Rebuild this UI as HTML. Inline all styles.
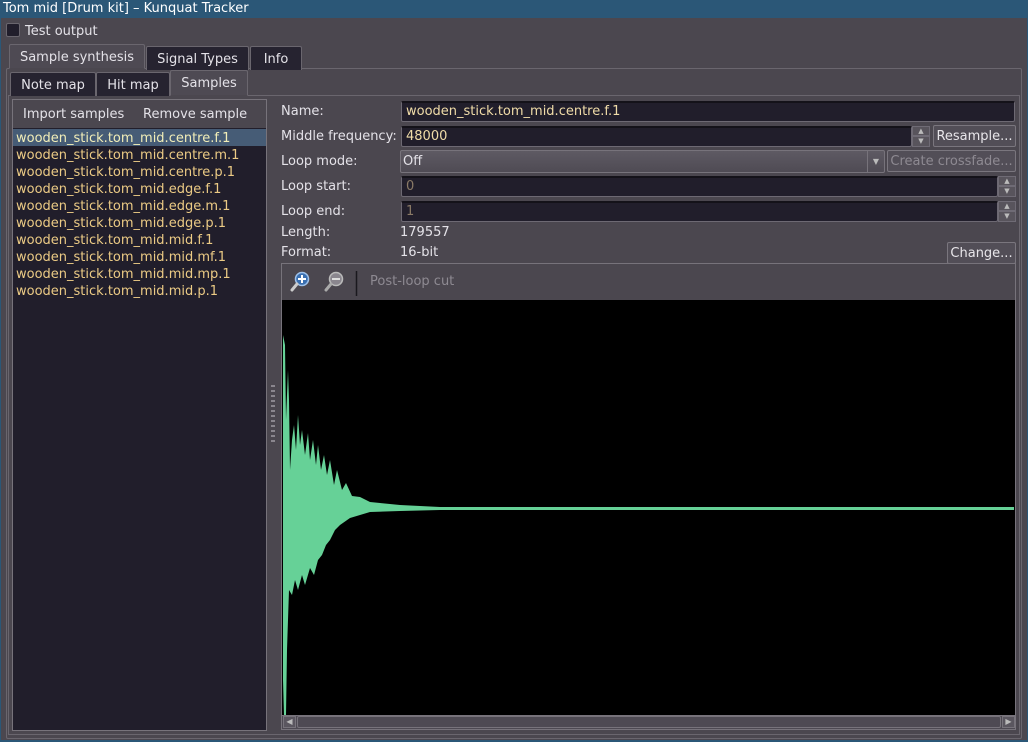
<!DOCTYPE html>
<html><head><meta charset="utf-8"><style>
*{box-sizing:border-box;margin:0;padding:0}
body{width:1028px;height:742px;background:#2b5777;font-family:"DejaVu Sans","Liberation Sans",sans-serif;font-size:13px;line-height:19px;color:#e4e2e8;position:relative;overflow:hidden}
.a{position:absolute}
.win{left:1px;top:18px;width:1026px;height:722px;background:#4b474f}
.title{left:0;top:0;width:1028px;height:18px;color:#fff;padding-left:3px;line-height:18px;font-size:13px}
.tab{position:absolute;height:24px;line-height:26px;text-align:center;border:1px solid #6a666e;border-bottom:none;border-radius:2px 2px 0 0;background:#262330;color:#e4e2e8}
.tab.sel{background:#4e4a53;color:#e4e2e8}
.field{position:absolute;background:#211e2b;border:1px solid #6d6973;border-top:2px solid #141219;border-radius:2px;color:#f0dca8;padding-left:4px;line-height:18px}
.btn{position:absolute;background:#524e57;border:1px solid #7a767e;border-radius:2px;text-align:center;line-height:21px;color:#e8e6ea}
.spin{position:absolute;width:18px;background:#58545c;border:1px solid #6f6b75;font-size:7px;color:#bbb;text-align:center;line-height:8px}
.lbl{position:absolute;left:281px;color:#e4e2e8}
.row{height:17px;line-height:19px;padding-left:3px;color:#eccb85}
</style></head><body>
<div class="a title">Tom mid [Drum kit] – Kunquat Tracker</div>
<div class="a win"></div>
<div class="a" style="left:6px;top:23px;width:14px;height:14px;background:#211e2b;border:1px solid #6a666e;border-radius:2px"></div>
<div class="a" style="left:25px;top:22px">Test output</div>
<div class="a" style="left:6px;top:68px;width:1016px;height:671px;border:1px solid #6a666e;border-radius:2px;background:#4b474f"></div>
<div class="tab sel" style="left:9px;top:44px;width:136px;height:25px;border-bottom:1px solid #4b474f">Sample synthesis</div>
<div class="tab" style="left:146px;top:46px;width:103px">Signal Types</div>
<div class="tab" style="left:250px;top:46px;width:52px">Info</div>
<div class="a" style="left:8px;top:95px;width:1012px;height:640px;border:1px solid #6a666e;background:#4b474f"></div>
<div class="tab" style="left:10px;top:72px;width:86px">Note map</div>
<div class="tab" style="left:96px;top:72px;width:74px">Hit map</div>
<div class="tab sel" style="left:170px;top:70px;width:78px;height:26px;border-bottom:1px solid #4b474f">Samples</div>
<div class="a" style="left:12px;top:99px;width:255px;height:632px;border:1px solid #77737b;background:#211e2b"></div>
<div class="a" style="left:13px;top:100px;width:253px;height:28px;background:#4b474f"></div>
<div class="a" style="left:23px;top:105px">Import samples</div>
<div class="a" style="left:143px;top:105px">Remove sample</div>
<div class="a" style="left:13px;top:129px;width:253px">
<div class="row" style="background:#465c76;color:#f2eeb8">wooden_stick.tom_mid.centre.f.1</div>
<div class="row">wooden_stick.tom_mid.centre.m.1</div>
<div class="row">wooden_stick.tom_mid.centre.p.1</div>
<div class="row">wooden_stick.tom_mid.edge.f.1</div>
<div class="row">wooden_stick.tom_mid.edge.m.1</div>
<div class="row">wooden_stick.tom_mid.edge.p.1</div>
<div class="row">wooden_stick.tom_mid.mid.f.1</div>
<div class="row">wooden_stick.tom_mid.mid.mf.1</div>
<div class="row">wooden_stick.tom_mid.mid.mp.1</div>
<div class="row">wooden_stick.tom_mid.mid.p.1</div>
</div>
<div class="a" style="left:271px;top:385px;width:4px;height:58px;background:repeating-linear-gradient(#8a868e 0 2px,transparent 2px 5px)"></div>
<div class="lbl" style="top:102px">Name:</div>
<div class="field" style="left:401px;top:101px;width:614px;height:21px">wooden_stick.tom_mid.centre.f.1</div>
<div class="lbl" style="top:127px">Middle frequency:</div>
<div class="field" style="left:401px;top:126px;width:511px;height:21px">48000</div>
<div class="spin" style="left:912px;top:126px;height:10px">▲</div>
<div class="spin" style="left:912px;top:136px;height:11px">▼</div>
<div class="btn" style="left:933px;top:125px;width:83px;height:22px">Resample...</div>
<div class="lbl" style="top:152px">Loop mode:</div>
<div class="a" style="left:400px;top:150px;width:485px;height:23px;border:1px solid #77737b;border-radius:2px;background:linear-gradient(#5e5a63,#4f4b54);padding-left:2px;line-height:21px">Off</div>
<div class="a" style="left:867px;top:151px;width:17px;height:21px;border-left:1px solid #77737b;font-size:8px;color:#bbb;text-align:center;line-height:21px">▼</div>
<div class="btn" style="left:887px;top:150px;width:129px;height:22px;color:#8e8a92">Create crossfade...</div>
<div class="lbl" style="top:177px">Loop start:</div>
<div class="field" style="left:401px;top:176px;width:597px;height:21px;color:#8a7a66">0</div>
<div class="spin" style="left:998px;top:176px;height:10px">▲</div>
<div class="spin" style="left:998px;top:186px;height:11px">▼</div>
<div class="lbl" style="top:202px">Loop end:</div>
<div class="field" style="left:401px;top:201px;width:597px;height:21px;color:#8a7a66">1</div>
<div class="spin" style="left:998px;top:201px;height:10px">▲</div>
<div class="spin" style="left:998px;top:211px;height:11px">▼</div>
<div class="lbl" style="top:223px">Length:</div>
<div class="a" style="left:400px;top:223px">179557</div>
<div class="lbl" style="top:243px">Format:</div>
<div class="a" style="left:400px;top:243px">16-bit</div>
<div class="btn" style="left:947px;top:242px;width:69px;height:22px">Change...</div>
<div class="a" style="left:281px;top:263px;width:735px;height:467px;border:1px solid #77737b;background:#4b474f"></div>
<svg class="a" style="left:288px;top:268px" width="80" height="28">
<circle cx="14" cy="11" r="6.5" fill="#3a6fb0" stroke="#9fc2ea" stroke-width="1.5"/>
<path d="M10 11h8M14 7v8" stroke="#fff" stroke-width="2"/>
<path d="M9 16l-5 6" stroke="#ccc" stroke-width="3" stroke-linecap="round"/>
<circle cx="48" cy="11" r="6.5" fill="#8a868e" stroke="#bbb" stroke-width="1.5"/>
<path d="M44 11h8" stroke="#ddd" stroke-width="2"/>
<path d="M43 16l-5 6" stroke="#aaa" stroke-width="3" stroke-linecap="round"/>
<path d="M68.5 3v26" stroke="#1a181e" stroke-width="1.5"/>
</svg>
<div class="a" style="left:370px;top:272px;color:#8e8a92">Post-loop cut</div>
<svg class="a" style="left:282px;top:300px" width="733" height="416">
<rect width="733" height="416" fill="#000"/>
<path fill="#66d197" d="M1 35L3 45L4 120L6 70L7 100L8 170L10 140L12 125L14 150L16 115L18 145L20 130L23 155L26 133L28 160L31 140L34 165L36 145L39 170L42 155L45 175L48 160L52 185L55 170L60 190L64 183L70 196L78 197L88 202L98 203L118 205L138 206L158 207L732 207L732 210L158 210L118 211L88 212L78 215L68 218L58 225L53 230L48 240L44 245L40 255L36 260L32 275L28 268L23 285L20 275L16 290L13 280L10 295L7 290L5 350L4 415L2 415L1 380Z"/>
</svg>
<div class="a" style="left:282px;top:715px;width:733px;height:14px;background:#4e4a53;border-top:1px solid #77737b"></div>
<div class="a" style="left:283px;top:716px;width:13px;height:12px;background:#5a565f;border:1px solid #77737b;font-size:8px;color:#bbb;line-height:10px;text-align:center">◀</div>
<div class="a" style="left:297px;top:716px;width:704px;height:12px;border:1px solid #77737b;border-radius:2px"></div>
<div class="a" style="left:1002px;top:716px;width:13px;height:12px;background:#5a565f;border:1px solid #77737b;font-size:8px;color:#bbb;line-height:10px;text-align:center">▶</div>
</body></html>
